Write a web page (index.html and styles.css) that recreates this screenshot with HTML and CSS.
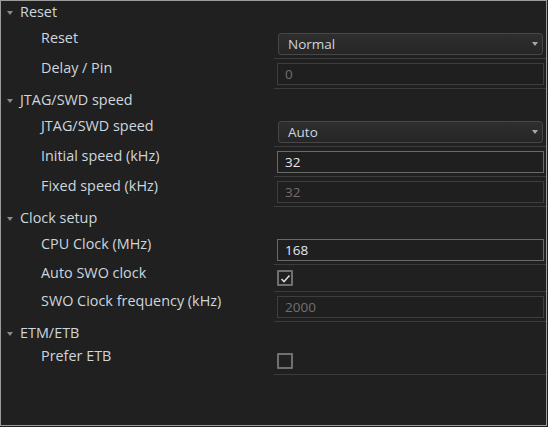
FILE: index.html
```html
<!DOCTYPE html>
<html>
<head>
<meta charset="utf-8">
<link rel="stylesheet" href="styles.css">
</head>
<body>
<div class="panel">
  <div class="group">
    <div class="group-head"><span class="caret"></span>Reset</div>
    <div class="group-body">
      <div class="row">
        <div class="label">Reset</div>
        <div class="ctrl"><div class="select"><span>Normal</span><span class="arrow"></span></div></div>
      </div>
      <div class="row">
        <div class="label">Delay / Pin</div>
        <div class="ctrl"><div class="input disabled">0</div></div>
      </div>
    </div>
  </div>
  <div class="group">
    <div class="group-head"><span class="caret"></span>JTAG/SWD speed</div>
    <div class="group-body">
      <div class="row">
        <div class="label">JTAG/SWD speed</div>
        <div class="ctrl"><div class="select"><span>Auto</span><span class="arrow"></span></div></div>
      </div>
      <div class="row">
        <div class="label">Initial speed (kHz)</div>
        <div class="ctrl"><div class="input">32</div></div>
      </div>
      <div class="row">
        <div class="label">Fixed speed (kHz)</div>
        <div class="ctrl"><div class="input disabled">32</div></div>
      </div>
    </div>
  </div>
  <div class="group">
    <div class="group-head"><span class="caret"></span>Clock setup</div>
    <div class="group-body">
      <div class="row">
        <div class="label">CPU Clock (MHz)</div>
        <div class="ctrl"><div class="input">168</div></div>
      </div>
      <div class="row check-row">
        <div class="label">Auto SWO clock</div>
        <div class="ctrl"><div class="checkbox"><svg width="11" height="9" viewBox="0 0 11 9"><path d="M1.5 5 L4 7.5 L9.5 1.5" fill="none" stroke="#d8d8d8" stroke-width="1.6"/></svg></div></div>
      </div>
      <div class="row">
        <div class="label">SWO Ciock frequency (kHz)</div>
        <div class="ctrl"><div class="input disabled">2000</div></div>
      </div>
    </div>
  </div>
  <div class="group">
    <div class="group-head"><span class="caret"></span>ETM/ETB</div>
    <div class="group-body">
      <div class="row check-row last">
        <div class="label">Prefer ETB</div>
        <div class="ctrl"><div class="checkbox"></div></div>
      </div>
    </div>
  </div>
</div>
</body>
</html>
```
FILE: styles.css
```css
html, body {
  margin: 0;
  padding: 0;
  background: #202020;
}
body {
  font-family: "Open Sans", "Noto Sans", sans-serif;
  font-size: 14.4px;
  color: #cdd6df;
}
.panel {
  box-sizing: border-box;
  width: 547px;
  height: 426px;
  border: 1px solid #9c9c9c;
  background: #202020;
  overflow: hidden;
}
.group-head {
  display: flex;
  align-items: center;
  height: 21px;
  line-height: 21px;
  padding-left: 6px;
}
.caret {
  width: 0;
  height: 0;
  border-left: 3.5px solid transparent;
  border-right: 3.5px solid transparent;
  border-top: 4px solid #8a8a8a;
  margin-right: 7px;
  margin-top: 3px;
}
.group-body {
  padding-top: 7px;
}
.row {
  display: flex;
  align-items: flex-start;
  position: relative;
  height: 30px;
  box-sizing: border-box;
  padding-top: 4px;
}
.row::after {
  content: "";
  position: absolute;
  left: 273px;
  right: 0;
  bottom: 0;
  height: 1px;
  background: #3c3c3c;
}
.check-row {
  height: 27px;
  padding-top: 5px;
}
.check-row.last {
  height: 25px;
  padding-top: 3px;
}
.label {
  width: 236px;
  padding-left: 40px;
  line-height: 12px;
  margin-top: -1px;
  white-space: nowrap;
}
.check-row .label {
  margin-top: -3px;
}
.ctrl {
  flex: 1;
  padding-right: 2px;
}
.input {
  box-sizing: border-box;
  height: 22px;
  border: 1px solid #6a6a6a;
  background: #1f1f1f;
  padding-left: 7px;
  line-height: 20px;
  font-size: 13.5px;
  color: #e2e8ee;
}
.input.disabled {
  border-color: #3e3e3e;
  color: #6f6f6f;
}
.select {
  box-sizing: border-box;
  height: 22px;
  margin: 0 1px;
  border: 1px solid #474747;
  border-radius: 3px;
  background: linear-gradient(#2e2e2e, #262626);
  padding-left: 9px;
  padding-right: 4px;
  line-height: 20px;
  display: flex;
  justify-content: space-between;
  align-items: center;
  color: #cdd6df;
  font-size: 13.5px;
}
.arrow {
  width: 0;
  height: 0;
  border-left: 3.5px solid transparent;
  border-right: 3.5px solid transparent;
  border-top: 4px solid #a8a8a8;
}
.checkbox {
  box-sizing: border-box;
  width: 16px;
  height: 16px;
  border: 2px solid #707070;
  border-radius: 1px;
  display: flex;
  align-items: center;
  justify-content: center;
}
```
